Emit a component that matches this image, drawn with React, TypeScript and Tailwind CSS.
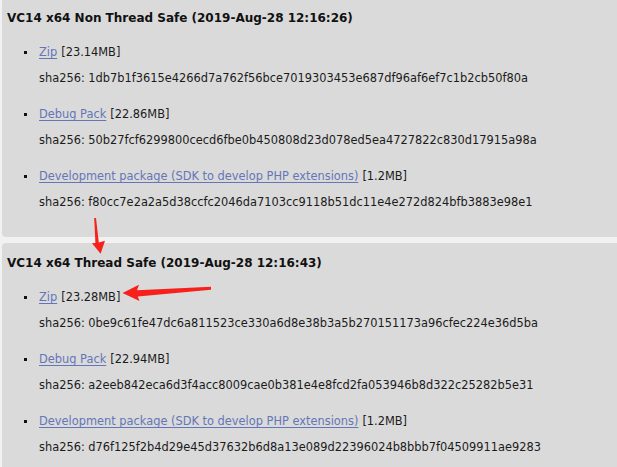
import React from 'react';

interface Build {
  label: string;
  size: string;
  sha: string;
}

interface Section {
  title: string;
  builds: Build[];
}

const sections: Section[] = [
  {
    title: 'VC14 x64 Non Thread Safe (2019-Aug-28 12:16:26)',
    builds: [
      { label: 'Zip', size: '[23.14MB]', sha: '1db7b1f3615e4266d7a762f56bce7019303453e687df96af6ef7c1b2cb50f80a' },
      { label: 'Debug Pack', size: '[22.86MB]', sha: '50b27fcf6299800cecd6fbe0b450808d23d078ed5ea4727822c830d17915a98a' },
      {
        label: 'Development package (SDK to develop PHP extensions)',
        size: '[1.2MB]',
        sha: 'f80cc7e2a2a5d38ccfc2046da7103cc9118b51dc11e4e272d824bfb3883e98e1',
      },
    ],
  },
  {
    title: 'VC14 x64 Thread Safe (2019-Aug-28 12:16:43)',
    builds: [
      { label: 'Zip', size: '[23.28MB]', sha: '0be9c61fe47dc6a811523ce330a6d8e38b3a5b270151173a96cfec224e36d5ba' },
      { label: 'Debug Pack', size: '[22.94MB]', sha: 'a2eeb842eca6d3f4acc8009cae0b381e4e8fcd2fa053946b8d322c25282b5e31' },
      {
        label: 'Development package (SDK to develop PHP extensions)',
        size: '[1.2MB]',
        sha: 'd76f125f2b4d29e45d37632b6d8a13e089d22396024b8bbb7f04509911ae9283',
      },
    ],
  },
];

function BuildBox({ section, first }: { section: Section; first: boolean }) {
  return (
    <div
      className={`ml-[2px] bg-[#dadada] pl-[5px] pb-[25px] ${
        first ? 'rounded-bl-[4px] pt-[8px]' : 'rounded-tl-[4px] pt-[10px]'
      }`}
    >
      <h3 className="text-[12px] leading-[20px] font-bold text-[#111]">{section.title}</h3>
      <ul className="mt-[14px] flex flex-col gap-[16px]">
        {section.builds.map((b) => (
          <li key={b.label} className="flex flex-col">
            <div className="flex items-center leading-[20px]">
              <span className="ml-[17px] mr-[12px] h-[3px] w-[3px] bg-[#111]" />
              <a href="#" className="text-[#6576b6] underline underline-offset-2">
                {b.label}
              </a>
              <span className="ml-[4px] text-[#1b1b1b]">{b.size}</span>
            </div>
            <div className="mt-[6px] pl-[32px] leading-[20px] text-[#1b1b1b]">sha256: {b.sha}</div>
          </li>
        ))}
      </ul>
    </div>
  );
}

export default function App() {
  return (
    <div
      className="relative h-[467px] w-[617px] overflow-hidden bg-[#f1f1f1] text-[11.4px]"
      style={{ fontFamily: '"DejaVu Sans", Verdana, sans-serif' }}
    >
      <div className="flex flex-col gap-[6px]">
        {sections.map((s, i) => (
          <BuildBox key={s.title} section={s} first={i === 0} />
        ))}
      </div>

      {/* red annotation arrows */}
      <svg className="pointer-events-none absolute left-0 top-0" width="617" height="467">
        <polygon
          fill="#f5211a"
          points="94.2,218 96,218 98.8,242.5 105,240.8 100.6,253.8 92,243.2 95.4,243"
        />
        <polygon
          fill="#f5211a"
          points="122.5,293 139,284.8 137,290.2 211,286.8 211,289.8 137.8,296.4 139.5,301"
        />
      </svg>
    </div>
  );
}
